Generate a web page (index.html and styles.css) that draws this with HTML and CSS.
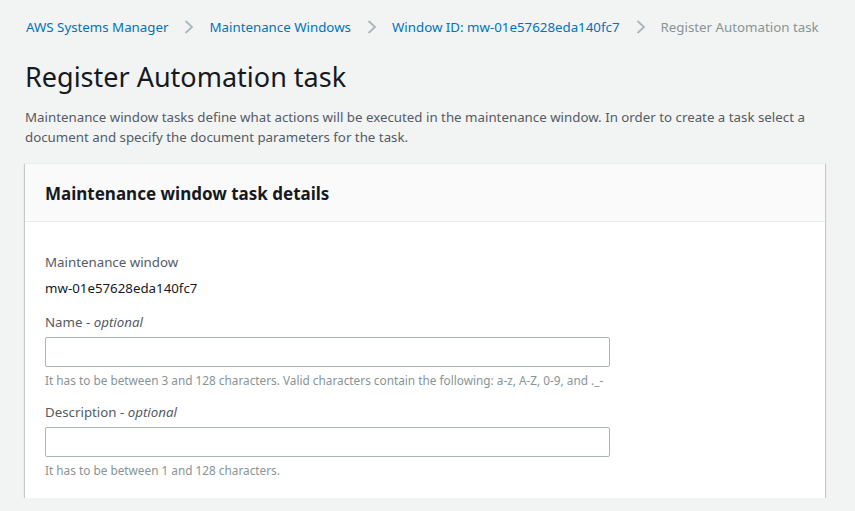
FILE: index.html
```html
<!DOCTYPE html>
<html>
<head>
<meta charset="utf-8">
<link rel="stylesheet" href="styles.css">
</head>
<body>
<div class="page">
  <nav class="crumbs">
    <a class="crumb" href="#">AWS Systems Manager</a>
    <svg class="chev" viewBox="0 0 10 14" width="10" height="14"><path d="M1.5 1l6.5 6-6.5 6" fill="none" stroke="currentColor" stroke-width="1.8"/></svg>
    <a class="crumb" href="#">Maintenance Windows</a>
    <svg class="chev" viewBox="0 0 10 14" width="10" height="14"><path d="M1.5 1l6.5 6-6.5 6" fill="none" stroke="currentColor" stroke-width="1.8"/></svg>
    <a class="crumb" href="#">Window ID: mw-01e57628eda140fc7</a>
    <svg class="chev" viewBox="0 0 10 14" width="10" height="14"><path d="M1.5 1l6.5 6-6.5 6" fill="none" stroke="currentColor" stroke-width="1.8"/></svg>
    <span class="crumb current">Register Automation task</span>
  </nav>
  <h1 class="title">Register Automation task</h1>
  <p class="intro">Maintenance window tasks define what actions will be executed in the maintenance window. In order to create a task select a document and specify the document parameters for the task.</p>
  <section class="card">
    <header class="card-head"><h2>Maintenance window task details</h2></header>
    <div class="card-body">
      <div class="field">
        <div class="label">Maintenance window</div>
        <div class="value">mw-01e57628eda140fc7</div>
      </div>
      <div class="field">
        <div class="label">Name - <i>optional</i></div>
        <input class="input" type="text">
        <div class="hint">It has to be between 3 and 128 characters. Valid characters contain the following: a-z, A-Z, 0-9, and ._-</div>
      </div>
      <div class="field">
        <div class="label">Description - <i>optional</i></div>
        <input class="input" type="text">
        <div class="hint">It has to be between 1 and 128 characters.</div>
      </div>
    </div>
  </section>
</div>
</body>
</html>
```
FILE: styles.css
```css
html, body { margin: 0; padding: 0; }
body {
  background: #f2f3f3;
  font-family: "Noto Sans", "Open Sans", sans-serif;
  color: #16191f;
  font-size: 14px;
}
.page { padding: 16px 30px 0 25px; }
.crumbs { display: flex; align-items: center; height: 22px; margin-left: 1px; white-space: nowrap; }
.crumb { color: #0073bb; text-decoration: none; font-size: 13.3px; line-height: 22px; flex-shrink: 0; }
.crumb.current { color: #879596; }
.chev { color: #aab7b8; margin: 0 15px 0 16px; width: 10px; height: 14px; flex-shrink: 0; }
.title {
  font-size: 27px; font-weight: 400; margin: 21px 0 0; line-height: 36px;
}
.intro { color: #545b64; margin: 12px 0 16px; line-height: 20px; font-size: 13.3px; }
.card {
  background: #fff;
  border-top: 1px solid #eaeded;
  box-shadow: 0 1px 1px 0 rgba(0,28,36,.3), 1px 1px 1px 0 rgba(0,28,36,.15), -1px 1px 1px 0 rgba(0,28,36,.15);
}
.card-head {
  background: #fafafa; border-bottom: 1px solid #eaeded;
  padding: 19px 20px 16px;
}
.card-head h2 { margin: 0; font-size: 17px; font-weight: 700; line-height: 22px; }
.card-body { padding: 30px 20px 20px; display: flex; flex-direction: column; gap: 14px; }
.field { display: flex; flex-direction: column; }
.label { color: #545b64; line-height: 20px; font-size: 13.3px; }
.label i { font-style: italic; }
.value { margin-top: 6px; line-height: 20px; font-size: 13.3px; }
.input {
  margin-top: 5px; width: 565px; height: 30px; box-sizing: border-box;
  border: 1px solid #aab7b8; border-radius: 2px; background: #fff;
}
.hint { color: #879596; font-size: 11.8px; line-height: 16px; margin-top: 5px; }
```
